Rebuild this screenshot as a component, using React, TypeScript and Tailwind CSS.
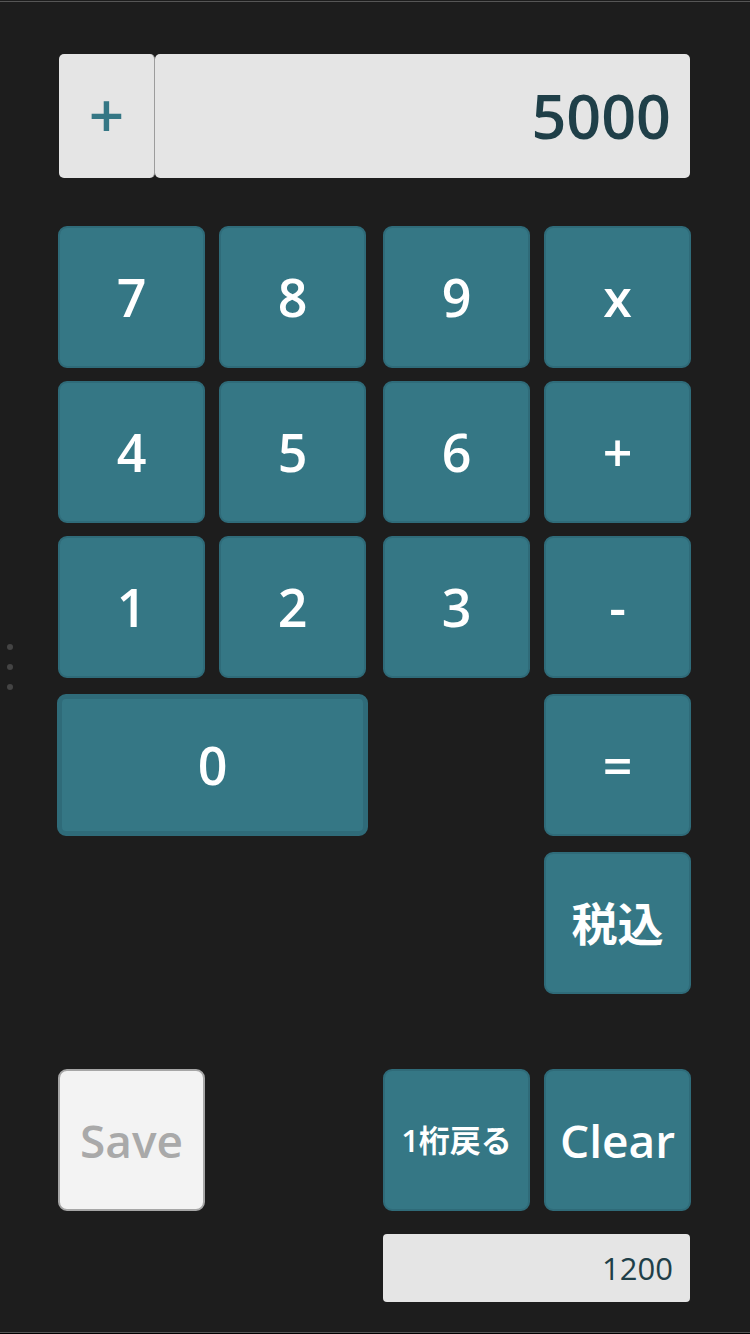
import React from "react";

const font = "font-['Open_Sans','Noto_Sans_CJK_JP',sans-serif]";

function Key({ label, className = "" }: { label: string; className?: string }) {
   return (
      <button
         className={`flex h-[142px] w-[147px] items-center justify-center rounded-[9px] border-2 border-[#2f6b79] bg-[#357785] font-semibold text-white ${className}`}
      >
         {label}
      </button>
   );
}

export default function App() {
   return (
      <div className={`relative flex h-[1334px] w-[750px] flex-col bg-[#1d1d1d] ${font}`}>
         {/* top edge */}
         <div className="mt-px h-px bg-[#565656]" />

         {/* scroll dots */}
         <div className="absolute left-[7px] top-[644px] flex flex-col gap-[14px]">
            <span className="h-[6px] w-[6px] rounded-full bg-[#444]" />
            <span className="h-[6px] w-[6px] rounded-full bg-[#444]" />
            <span className="h-[6px] w-[6px] rounded-full bg-[#444]" />
         </div>

         {/* display */}
         <div className="ml-[59px] mt-[52px] flex h-[124px] w-[631px]">
            <div className="flex w-[96px] items-center justify-center rounded-[5px] border-r border-[#9c9c9c] bg-[#e5e5e5] pb-[4px] text-[62px] font-semibold text-[#357785]">
               +
            </div>
            <div className="flex flex-1 items-center justify-end rounded-[5px] bg-[#e5e5e5] pr-[19px] text-[61px] font-semibold text-[#1f3f48]">
               5000
            </div>
         </div>

         {/* keypad */}
         <div className="ml-[58px] mt-[48px] flex flex-col">
            <div className="grid grid-cols-[161px_164px_161px_147px] text-[52px]">
               <Key label="7" />
               <Key label="8" />
               <Key label="9" />
               <Key label="x" />
            </div>
            <div className="mt-[13px] grid grid-cols-[161px_164px_161px_147px] text-[52px]">
               <Key label="4" />
               <Key label="5" />
               <Key label="6" />
               <Key label="+" />
            </div>
            <div className="mt-[13px] grid grid-cols-[161px_164px_161px_147px] text-[52px]">
               <Key label="1" />
               <Key label="2" />
               <Key label="3" />
               <Key label="-" />
            </div>
            <div className="mt-[16px] grid grid-cols-[161px_164px_161px_147px] text-[52px]">
               <Key label="0" className="col-span-2 -ml-px w-[311px] border-[5px]" />
               <div />
               <Key label="=" />
            </div>
            <div className="mt-[16px] grid grid-cols-[161px_164px_161px_147px]">
               <div />
               <div />
               <div />
               <Key label="税込" className="text-[46px] font-medium" />
            </div>

            {/* actions */}
            <div className="mt-[75px] grid grid-cols-[161px_164px_161px_147px]">
               <button className="flex h-[142px] w-[147px] items-center justify-center rounded-[9px] border-2 border-[#a6a6a6] bg-[#f3f3f3] text-[46px] font-semibold text-[#a9a9a9]">
                  Save
               </button>
               <div />
               <Key label="1桁戻る" className="text-[31px] font-medium" />
               <Key label="Clear" className="text-[46px]" />
            </div>

            {/* tax amount */}
            <div className="ml-[325px] mt-[23px] flex h-[68px] w-[307px] items-center justify-end rounded-[4px] bg-[#e5e5e5] pr-[17px] text-[31px] text-[#1f3f48]">
               1200
            </div>
         </div>

         {/* bottom edge */}
         <div className="mt-auto h-px bg-[#565656]" />
         <div className="h-px bg-black" />
      </div>
   );
}
